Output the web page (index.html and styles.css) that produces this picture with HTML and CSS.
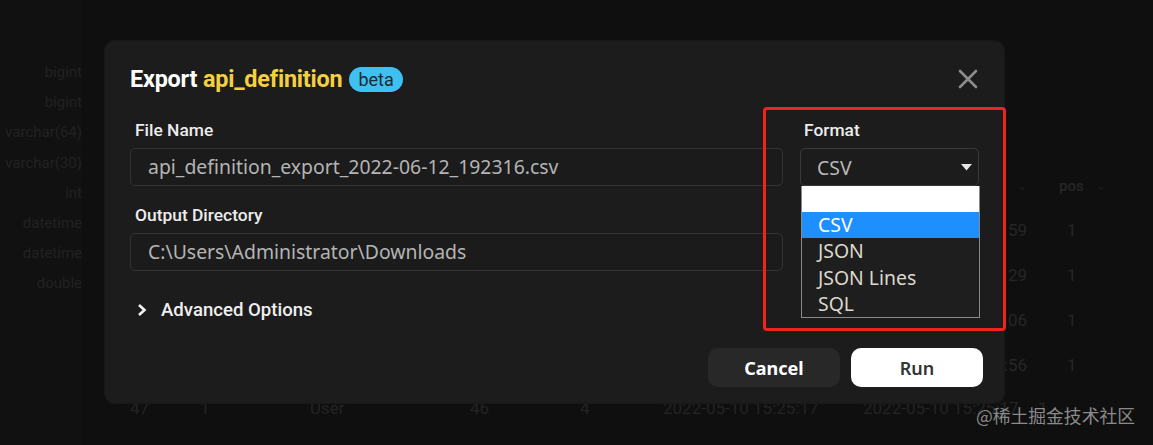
FILE: index.html
```html
<!DOCTYPE html>
<html>
<head>
<meta charset="utf-8">
<link rel="stylesheet" href="styles.css">
</head>
<body>
<div class="bg">
  <div class="types">
    <div>bigint</div><div>bigint</div><div>varchar(64)</div><div>varchar(30)</div>
    <div>int</div><div>datetime</div><div>datetime</div><div>double</div>
  </div>
  <div class="main">
    <div class="poscol">
      <div class="poshead"><span class="dim">⌄</span><span class="ph">pos</span><span class="dim">⌄</span></div>
      <div class="posrow"><span class="pv">59</span><span>1</span></div>
      <div class="posrow"><span class="pv">29</span><span>1</span></div>
      <div class="posrow"><span class="pv">06</span><span>1</span></div>
      <div class="posrow"><span class="pv">:56</span><span>1</span></div>
    </div>
    <div class="lastrow">
      <span class="c1">47</span><span class="c2">1</span><span class="c3">User</span><span class="c4">46</span><span class="c5">4</span><span class="c6">2022-05-10 15:25:17</span><span class="c7">2022-05-10 15:25:17</span><span class="c8">1</span>
    </div>
  </div>
</div>

<div class="modal">
  <div class="header">
    <h1 class="title">Export <span class="tname">api_definition</span><span class="badge">beta</span></h1>
    <svg class="close" width="20" height="20" viewBox="0 0 20 20"><path d="M2 2 L18 18 M18 2 L2 18" stroke="#8c8c8c" stroke-width="2.6" stroke-linecap="round"/></svg>
  </div>
  <div class="form">
    <div class="leftcol">
      <label class="label">File Name</label>
      <div class="input">api_definition_export_2022-06-12_192316.csv</div>
      <label class="label second">Output Directory</label>
      <div class="input">C:\Users\Administrator\Downloads</div>
      <div class="advanced">
        <svg width="10" height="14" viewBox="0 0 10 14"><path d="M2 2 L7.5 7 L2 12" fill="none" stroke="#f2f2f2" stroke-width="2.6"/></svg>
        <span>Advanced Options</span>
      </div>
    </div>
    <div class="rightcol">
      <label class="label">Format</label>
      <div class="select">
        <span>CSV</span>
        <svg width="11" height="7" viewBox="0 0 11 7"><path d="M0 0 L11 0 L5.5 6.5 Z" fill="#e6e6e6"/></svg>
        <div class="dropdown">
          <div class="opt blank"></div>
          <div class="opt active">CSV</div>
          <div class="opt">JSON</div>
          <div class="opt">JSON Lines</div>
          <div class="opt">SQL</div>
        </div>
      </div>
    </div>
  </div>
  <div class="actions">
    <button class="btn cancel">Cancel</button>
    <button class="btn run">Run</button>
  </div>
  <div class="highlight"></div>
</div>

<div class="watermark">@稀土掘金技术社区</div>
</body>
</html>
```
FILE: styles.css
```css
* { box-sizing: border-box; }
html, body { margin: 0; padding: 0; }
body {
  width: 1153px;
  height: 445px;
  overflow: hidden;
  position: relative;
  background: #0f0f0f;
  font-family: Roboto, "Noto Sans", sans-serif;
}
.bg {
  display: flex;
  height: 100%;
  color: #222222;
  font-size: 15px;
}
.types {
  width: 82px;
  padding-top: 57px;
  text-align: right;
  line-height: 30.2px;
  color: #222222;
  background: #111111;
  white-space: nowrap;
  overflow: hidden;
  direction: rtl;
}
.types div { direction: ltr; unicode-bidi: isolate; }
.main {
  flex: 1;
  display: flex;
  flex-direction: column;
}
.poscol {
  margin-left: 915px;
  margin-top: 174px;
  width: 130px;
  color: #262626;
  font-size: 17px;
}
.poshead {
  display: flex;
  align-items: center;
  height: 24px;
  font-size: 15px;
  font-weight: 500;
}
.poshead .dim { color: #1e1e1e; font-size: 12px; }
.poshead .dim:first-child { margin-left: 20px; }
.poshead .ph { margin-left: 32px; margin-right: 12px; }
.posrow {
  display: flex;
  height: 45px;
  align-items: center;
  padding-top: 18px;
}
.pv { width: 30px; text-align: right; margin-right: 40px; }
.lastrow {
  display: flex;
  margin-top: 20px;
  color: #232323;
  font-size: 17px;
  margin-left: 48px;
}
.lastrow span { display: block; }
.c1 { width: 70px; }
.c2 { width: 110px; }
.c3 { width: 160px; }
.c4 { width: 110px; }
.c5 { width: 83px; }
.c6 { width: 200px; }
.c7 { width: 175px; }

.modal {
  position: absolute;
  left: 105px;
  top: 41px;
  width: 899px;
  height: 362px;
  background: #1c1c1c;
  border-radius: 10px;
  padding: 22px 21px 16px 25px;
  display: flex;
  flex-direction: column;
  box-shadow: 0 0 0 1px #181818;
}
.header {
  display: flex;
  align-items: center;
  justify-content: space-between;
  height: 32px;
}
.title {
  margin: 0;
  font-size: 23.4px;
  font-weight: 700;
  color: #ffffff;
  letter-spacing: -0.2px;
  display: flex;
  align-items: center;
  white-space: pre;
}
.tname { color: #f4d03f; }
.badge {
  display: inline-block;
  margin-left: 7px;
  background: #3ec0f2;
  color: #1a2a33;
  font-weight: 400;
  font-size: 18px;
  line-height: 25px;
  height: 25px;
  padding: 0 9px;
  border-radius: 13px;
  letter-spacing: 0;
}
.close { margin-right: 5px; }
.form {
  display: flex;
  gap: 17px;
  margin-top: 25px;
}
.leftcol { width: 653px; display: flex; flex-direction: column; }
.rightcol { width: 179px; display: flex; flex-direction: column; margin-right: 4px; }
.label {
  display: block;
  font-size: 17.4px;
  font-weight: 500;
  color: #ececec;
  line-height: 21px;
  padding-left: 5px;
  margin-bottom: 7px;
}
.rightcol .label { padding-left: 4px; }
.label.second { margin-top: 19px; }
.input {
  height: 38px;
  border: 1px solid #333333;
  border-radius: 5px;
  background: #1b1b1b;
  color: #b4b4b4;
  font-family: "Noto Sans", "Open Sans", sans-serif;
  font-size: 19.4px;
  line-height: 36px;
  padding-left: 17px;
  white-space: nowrap;
}
.advanced {
  display: flex;
  align-items: center;
  gap: 14px;
  margin-top: 28px;
  padding-left: 7px;
  color: #efefef;
  font-size: 18.6px;
  font-weight: 500;
}
.select {
  position: relative;
  height: 38px;
  border: 1px solid #3a3a3a;
  border-radius: 5px;
  display: flex;
  align-items: center;
  justify-content: space-between;
  padding: 0 6px 0 16px;
  color: #b8b8b8;
  font-family: "Noto Sans", "Open Sans", sans-serif;
  font-size: 19.4px;
}
.dropdown {
  position: absolute;
  left: 0;
  top: 37px;
  width: 179px;
  background: #1e1e1e;
  border: 1px solid #8a8a8a;
  border-top: none;
  font-family: "Noto Sans", "Open Sans", sans-serif;
  font-size: 19.4px;
  color: #dcd8cc;
}
.opt {
  height: 26.2px;
  line-height: 26px;
  padding-left: 16px;
}
.opt.blank { background: #ffffff; }
.opt.active { background: #1e8fff; color: #ffffff; }
.actions {
  margin-top: auto;
  display: flex;
  justify-content: flex-end;
  gap: 11px;
}
.btn {
  width: 132px;
  height: 39px;
  border: none;
  border-radius: 10px;
  font-family: "Noto Sans", "Open Sans", sans-serif;
  font-size: 18px;
  font-weight: 700;
  padding: 0;
}
.cancel { background: #282828; color: #ffffff; }
.run { background: #ffffff; color: #333333; font-weight: 600; }
.highlight {
  position: absolute;
  left: 658px;
  top: 66px;
  width: 243px;
  height: 224px;
  border: 3px solid #f2231c;
  border-radius: 4px;
  pointer-events: none;
}
.watermark {
  position: absolute;
  right: 18px;
  bottom: 19px;
  font-family: "Noto Sans CJK SC", sans-serif;
  font-size: 17.8px;
  color: #8a8a8a;
  line-height: 22px;
}
```
